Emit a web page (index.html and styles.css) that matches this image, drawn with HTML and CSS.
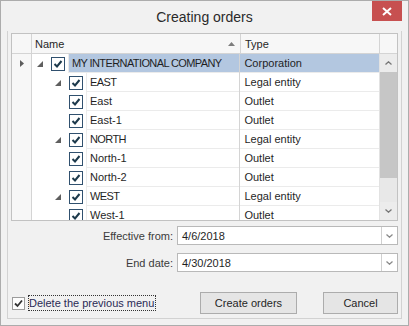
FILE: index.html
```html
<!DOCTYPE html>
<html>
<head>
  <title>Creating orders</title>
  <link rel="stylesheet" href="styles.css">
</head>
<body>
  <div class="window">
    <div class="titlebar">
      <span></span>
      <div class="title">Creating orders</div>
      <div class="close-wrap">
        <div class="close">
          <svg width="10" height="9" viewBox="0 0 10 9"><path d="M1 1 L9 8 M9 1 L1 8" stroke="#fff" stroke-width="2"/></svg>
        </div>
      </div>
    </div>

    <div class="panel">
      <div class="grid">
        <div class="grid-head">
          <div class="ind"></div>
          <div class="hcell col-name">Name
            <svg class="sort" width="7" height="4" viewBox="0 0 7 4"><path d="M0 4 L3.5 0 L7 4 Z" fill="#7d7d7d"/></svg>
          </div>
          <div class="hcell col-type">Type</div>
          <div class="hcell col-sb"></div>
        </div>

        <div class="grid-body">
          <div class="rows">
            <div class="row selected">
              <div class="ind"><svg width="4" height="7" viewBox="0 0 4 7"><path d="M0 0 L4 3.5 L0 7 Z" fill="#5c5c5c"/></svg></div>
              <div class="col-name">
                <span class="exp"><svg width="6" height="6" viewBox="0 0 6 6"><path d="M6 0 L6 6 L0 6 Z" fill="#5f5f5f"/></svg></span>
                <span class="chk"><svg width="14" height="14" viewBox="0 0 14 14"><rect x="0.5" y="0.5" width="13" height="13" fill="#fff" stroke="#30506e"/><path d="M3.5 7 L6 9.5 L10.5 4" fill="none" stroke="#1d3a4c" stroke-width="2"/></svg></span>
                <span class="text caps">MY INTERNATIONAL COMPANY</span>
              </div>
              <div class="col-type">Corporation</div>
            </div>

            <div class="row">
              <div class="ind"></div>
              <div class="col-name">
                <span class="pad"></span>
                <span class="exp"><svg width="6" height="6" viewBox="0 0 6 6"><path d="M6 0 L6 6 L0 6 Z" fill="#5f5f5f"/></svg></span>
                <span class="chk"><svg width="14" height="14" viewBox="0 0 14 14"><rect x="0.5" y="0.5" width="13" height="13" fill="#fff" stroke="#30506e"/><path d="M3.5 7 L6 9.5 L10.5 4" fill="none" stroke="#1d3a4c" stroke-width="2"/></svg></span>
                <span class="text caps">EAST</span>
              </div>
              <div class="col-type">Legal entity</div>
            </div>

            <div class="row">
              <div class="ind"></div>
              <div class="col-name">
                <span class="pad"></span><span class="pad"></span>
                <span class="chk"><svg width="14" height="14" viewBox="0 0 14 14"><rect x="0.5" y="0.5" width="13" height="13" fill="#fff" stroke="#30506e"/><path d="M3.5 7 L6 9.5 L10.5 4" fill="none" stroke="#1d3a4c" stroke-width="2"/></svg></span>
                <span class="text">East</span>
              </div>
              <div class="col-type">Outlet</div>
            </div>

            <div class="row">
              <div class="ind"></div>
              <div class="col-name">
                <span class="pad"></span><span class="pad"></span>
                <span class="chk"><svg width="14" height="14" viewBox="0 0 14 14"><rect x="0.5" y="0.5" width="13" height="13" fill="#fff" stroke="#30506e"/><path d="M3.5 7 L6 9.5 L10.5 4" fill="none" stroke="#1d3a4c" stroke-width="2"/></svg></span>
                <span class="text">East-1</span>
              </div>
              <div class="col-type">Outlet</div>
            </div>

            <div class="row">
              <div class="ind"></div>
              <div class="col-name">
                <span class="pad"></span>
                <span class="exp"><svg width="6" height="6" viewBox="0 0 6 6"><path d="M6 0 L6 6 L0 6 Z" fill="#5f5f5f"/></svg></span>
                <span class="chk"><svg width="14" height="14" viewBox="0 0 14 14"><rect x="0.5" y="0.5" width="13" height="13" fill="#fff" stroke="#30506e"/><path d="M3.5 7 L6 9.5 L10.5 4" fill="none" stroke="#1d3a4c" stroke-width="2"/></svg></span>
                <span class="text caps">NORTH</span>
              </div>
              <div class="col-type">Legal entity</div>
            </div>

            <div class="row">
              <div class="ind"></div>
              <div class="col-name">
                <span class="pad"></span><span class="pad"></span>
                <span class="chk"><svg width="14" height="14" viewBox="0 0 14 14"><rect x="0.5" y="0.5" width="13" height="13" fill="#fff" stroke="#30506e"/><path d="M3.5 7 L6 9.5 L10.5 4" fill="none" stroke="#1d3a4c" stroke-width="2"/></svg></span>
                <span class="text">North-1</span>
              </div>
              <div class="col-type">Outlet</div>
            </div>

            <div class="row">
              <div class="ind"></div>
              <div class="col-name">
                <span class="pad"></span><span class="pad"></span>
                <span class="chk"><svg width="14" height="14" viewBox="0 0 14 14"><rect x="0.5" y="0.5" width="13" height="13" fill="#fff" stroke="#30506e"/><path d="M3.5 7 L6 9.5 L10.5 4" fill="none" stroke="#1d3a4c" stroke-width="2"/></svg></span>
                <span class="text">North-2</span>
              </div>
              <div class="col-type">Outlet</div>
            </div>

            <div class="row">
              <div class="ind"></div>
              <div class="col-name">
                <span class="pad"></span>
                <span class="exp"><svg width="6" height="6" viewBox="0 0 6 6"><path d="M6 0 L6 6 L0 6 Z" fill="#5f5f5f"/></svg></span>
                <span class="chk"><svg width="14" height="14" viewBox="0 0 14 14"><rect x="0.5" y="0.5" width="13" height="13" fill="#fff" stroke="#30506e"/><path d="M3.5 7 L6 9.5 L10.5 4" fill="none" stroke="#1d3a4c" stroke-width="2"/></svg></span>
                <span class="text caps">WEST</span>
              </div>
              <div class="col-type">Legal entity</div>
            </div>

            <div class="row">
              <div class="ind"></div>
              <div class="col-name">
                <span class="pad"></span><span class="pad"></span>
                <span class="chk"><svg width="14" height="14" viewBox="0 0 14 14"><rect x="0.5" y="0.5" width="13" height="13" fill="#fff" stroke="#30506e"/><path d="M3.5 7 L6 9.5 L10.5 4" fill="none" stroke="#1d3a4c" stroke-width="2"/></svg></span>
                <span class="text">West-1</span>
              </div>
              <div class="col-type">Outlet</div>
            </div>
          </div>

          <div class="scrollbar">
            <div class="sb-btn"><svg width="7" height="4" viewBox="0 0 7 4"><path d="M0.5 3.5 L3.5 0.8 L6.5 3.5" fill="none" stroke="#777" stroke-width="1.3"/></svg></div>
            <div class="thumb"></div>
            <div class="track"></div>
            <div class="sb-btn"><svg width="7" height="4" viewBox="0 0 7 4"><path d="M0.5 0.5 L3.5 3.2 L6.5 0.5" fill="none" stroke="#777" stroke-width="1.3"/></svg></div>
          </div>
        </div>
      </div>

      <div class="dates">
        <label class="date-label">Effective from:</label>
        <div class="combo">
          <span class="combo-text">4/6/2018</span>
          <span class="combo-btn"><svg width="7" height="4" viewBox="0 0 7 4"><path d="M0.5 0.5 L3.5 3.2 L6.5 0.5" fill="none" stroke="#8a8a8a" stroke-width="1.3"/></svg></span>
        </div>
        <label class="date-label">End date:</label>
        <div class="combo">
          <span class="combo-text">4/30/2018</span>
          <span class="combo-btn"><svg width="7" height="4" viewBox="0 0 7 4"><path d="M0.5 0.5 L3.5 3.2 L6.5 0.5" fill="none" stroke="#8a8a8a" stroke-width="1.3"/></svg></span>
        </div>
      </div>

      <div class="footer">
        <span class="box"><svg width="13" height="13" viewBox="0 0 13 13"><rect x="0.5" y="0.5" width="12" height="12" fill="#fdfdfd" stroke="#9c9c9c"/><path d="M3 6.5 L5.5 9 L10 3.5" fill="none" stroke="#333" stroke-width="1.8"/></svg></span>
        <span class="focus-label">Delete the previous menu</span>
        <span class="spacer"></span>
        <button class="btn btn-create">Create orders</button>
        <button class="btn btn-cancel">Cancel</button>
      </div>
    </div>
  </div>
</body>
</html>
```

FILE: styles.css
```css
body {
  margin: 0;
  font-family: "Liberation Sans", Arial, sans-serif;
  font-size: 11px;
  color: #1f1f1f;
  background-color: #f1f1f1;
}
.window {
  width: 409px;
  height: 326px;
  box-sizing: border-box;
  border: 1px solid #acacac;
  background-color: #f1f1f1;
  display: flex;
  flex-direction: column;
}
.titlebar {
  height: 30px;
  flex-shrink: 0;
  display: grid;
  grid-template-columns: 1fr auto 1fr;
}
.title {
  font-size: 14px;
  color: #2a2a2a;
  padding-top: 8px;
}
.close-wrap {
  display: flex;
  justify-content: flex-end;
  padding-right: 6px;
}
.close {
  width: 30px;
  height: 20px;
  background-color: #c75050;
  display: flex;
  align-items: center;
  justify-content: center;
}
.panel {
  flex: 1;
  margin: 0 6px 6px 6px;
  border: 1px solid #d2d2d2;
  border-top: none;
  padding: 2px 3px 3px 3px;
  display: flex;
  flex-direction: column;
}

/* grid */
.grid {
  height: 188px;
  flex-shrink: 0;
  box-sizing: border-box;
  border: 1px solid #c2c2c2;
  background-color: #fff;
  display: flex;
  flex-direction: column;
}
.grid-head {
  height: 20px;
  box-sizing: border-box;
  border-bottom: 1px solid #d4d4d4;
  display: flex;
  background-color: #f7f7f7;
}
.ind {
  width: 20px;
  box-sizing: border-box;
  border-right: 1px solid #d4d4d4;
  background-color: #f7f7f7;
  display: flex;
  align-items: center;
  justify-content: center;
  flex-shrink: 0;
}
.hcell {
  box-sizing: border-box;
  border-right: 1px solid #d4d4d4;
  display: flex;
  align-items: center;
  padding-left: 3px;
  color: #262626;
}
.grid-head .col-name {
  width: 209px;
  justify-content: space-between;
  padding-right: 5px;
}
.grid-head .col-type {
  width: 139px;
  padding-left: 4px;
}
.col-sb {
  width: 17px;
  border-right: none;
}
.grid-body {
  flex: 1;
  display: flex;
  overflow: hidden;
}
.rows {
  width: 368px;
  overflow: hidden;
}
.row {
  height: 19px;
  display: flex;
}
.row .col-name {
  width: 209px;
  box-sizing: border-box;
  border-right: 1px solid #d4d4d4;
  display: flex;
  align-items: stretch;
}
.pad,
.exp,
.chk {
  width: 18px;
  flex-shrink: 0;
  display: flex;
}
.exp {
  align-items: flex-end;
  justify-content: flex-end;
  padding: 0 7px 6px 0;
  box-sizing: border-box;
}
.chk {
  align-items: center;
  padding-left: 1px;
  box-sizing: border-box;
}
.text {
  flex: 1;
  border-left: 1px solid #ebebeb;
  border-bottom: 1px solid #ebebeb;
  padding-left: 3px;
  display: flex;
  align-items: center;
  white-space: nowrap;
  overflow: hidden;
}
.text.caps {
  letter-spacing: -0.6px;
}
.row .col-type {
  width: 139px;
  box-sizing: border-box;
  border-bottom: 1px solid #ebebeb;
  padding-left: 4px;
  display: flex;
  align-items: center;
}
.row.selected .text,
.row.selected .col-type {
  background-color: #b3c7e0;
}
.scrollbar {
  width: 17px;
  border-left: 1px solid #e2e2e2;
  background-color: #e8e8e8;
  display: flex;
  flex-direction: column;
}
.sb-btn {
  height: 18px;
  display: flex;
  align-items: center;
  justify-content: center;
  background-color: #ececec;
}
.thumb {
  height: 106px;
  background-color: #c6c6c6;
}
.track {
  flex: 1;
}

/* dates */
.dates {
  margin-top: 5px;
  display: grid;
  grid-template-columns: 1fr 221px;
  column-gap: 4px;
  row-gap: 8px;
}
.date-label {
  text-align: right;
  align-self: center;
  color: #3a3a3a;
}
.combo {
  height: 19px;
  box-sizing: border-box;
  border: 1px solid #b9b9b9;
  background-color: #fff;
  display: flex;
}
.combo-text {
  flex: 1;
  padding-left: 4px;
  display: flex;
  align-items: center;
}
.combo-btn {
  width: 15px;
  border-left: 1px solid #d0d0d0;
  display: flex;
  align-items: center;
  justify-content: center;
}

/* footer */
.footer {
  margin-top: 20px;
  display: flex;
  align-items: center;
  padding-left: 1px;
}
.box {
  display: flex;
  margin-right: 3px;
}
.focus-label {
  border: 1px dotted #333;
  padding: 1px 1px 1px 0;
  color: #2a2a55;
}
.spacer {
  flex: 1;
}
.btn {
  height: 22px;
  border: 1px solid #acacac;
  background-color: #e5e5e5;
  font-family: "Liberation Sans", Arial, sans-serif;
  font-size: 11px;
  color: #262626;
  padding: 0;
}
.btn-create {
  width: 97px;
  margin-right: 26px;
}
.btn-cancel {
  width: 75px;
}
```
